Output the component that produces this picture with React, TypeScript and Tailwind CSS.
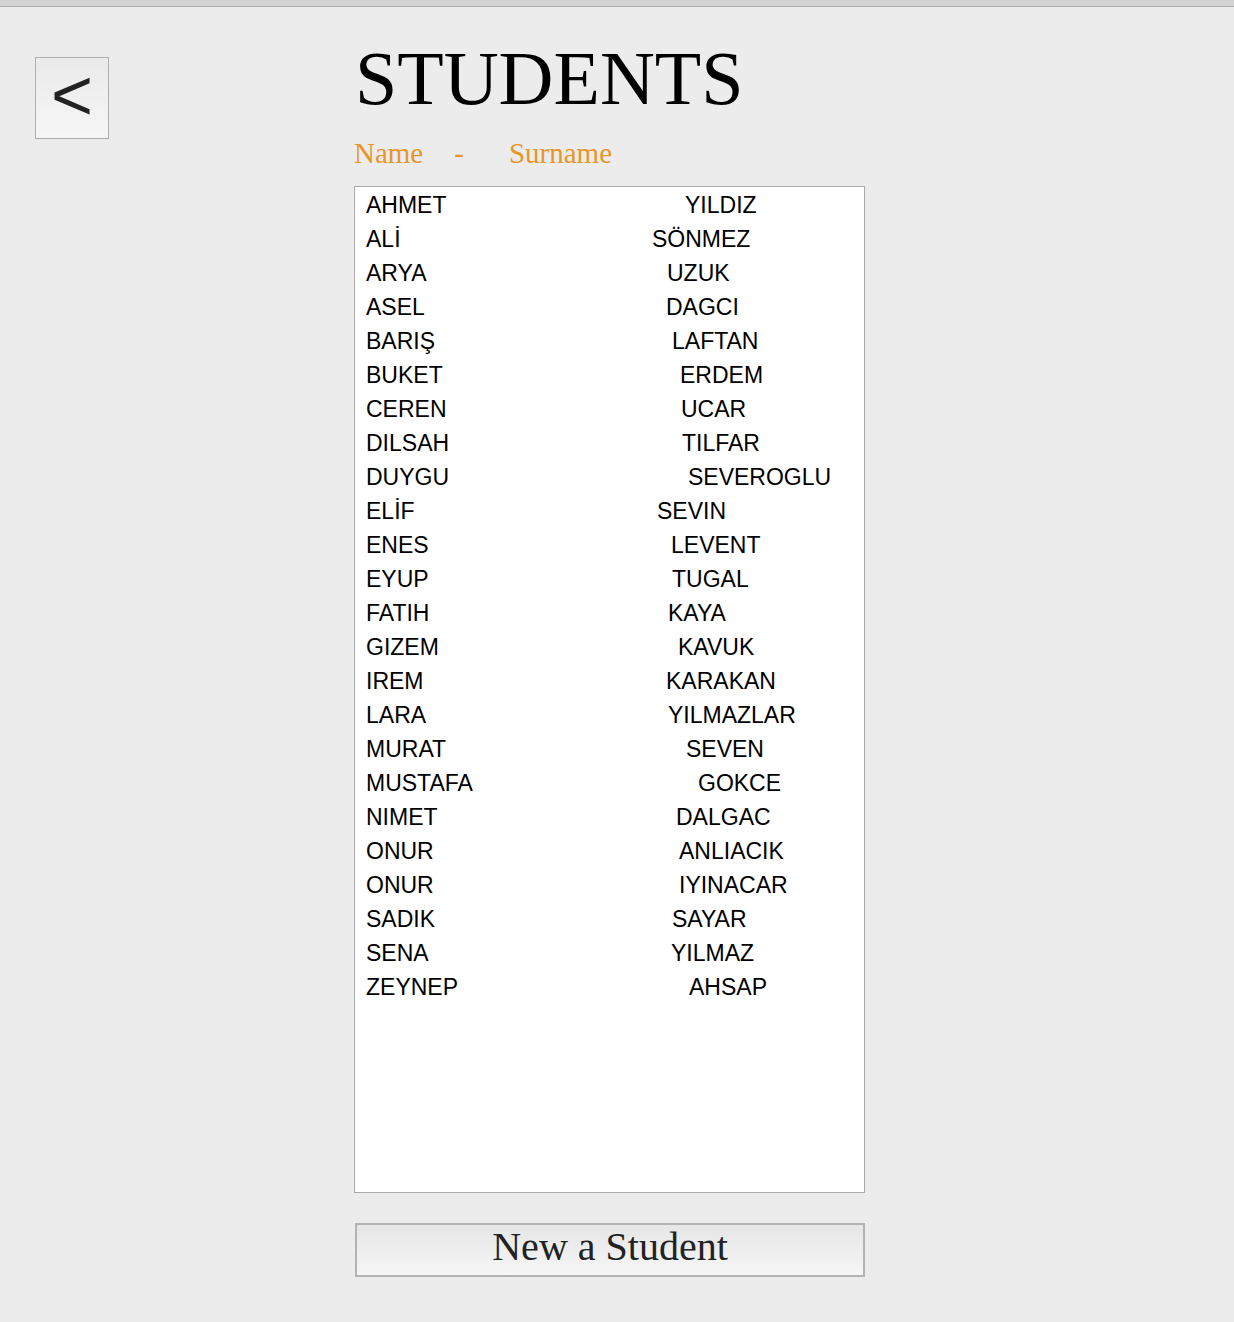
const students: { name: string; surname: string; indent: number }[] = [
  { name: "AHMET", surname: "YILDIZ", indent: 39 },
  { name: "ALİ", surname: "SÖNMEZ", indent: 6 },
  { name: "ARYA", surname: "UZUK", indent: 21 },
  { name: "ASEL", surname: "DAGCI", indent: 20 },
  { name: "BARIŞ", surname: "LAFTAN", indent: 26 },
  { name: "BUKET", surname: "ERDEM", indent: 34 },
  { name: "CEREN", surname: "UCAR", indent: 35 },
  { name: "DILSAH", surname: "TILFAR", indent: 36 },
  { name: "DUYGU", surname: "SEVEROGLU", indent: 42 },
  { name: "ELİF", surname: "SEVIN", indent: 11 },
  { name: "ENES", surname: "LEVENT", indent: 25 },
  { name: "EYUP", surname: "TUGAL", indent: 26 },
  { name: "FATIH", surname: "KAYA", indent: 22 },
  { name: "GIZEM", surname: "KAVUK", indent: 32 },
  { name: "IREM", surname: "KARAKAN", indent: 20 },
  { name: "LARA", surname: "YILMAZLAR", indent: 22 },
  { name: "MURAT", surname: "SEVEN", indent: 40 },
  { name: "MUSTAFA", surname: "GOKCE", indent: 52 },
  { name: "NIMET", surname: "DALGAC", indent: 30 },
  { name: "ONUR", surname: "ANLIACIK", indent: 33 },
  { name: "ONUR", surname: "IYINACAR", indent: 33 },
  { name: "SADIK", surname: "SAYAR", indent: 26 },
  { name: "SENA", surname: "YILMAZ", indent: 25 },
  { name: "ZEYNEP", surname: "AHSAP", indent: 43 },
];

export default function App() {
  return (
    <div className="min-h-[1322px] bg-[#ececec]">
      <div className="h-[6px] bg-[#d3d3d3]" />
      <div className="h-px bg-[#ababab]" />

      <div className="flex pl-[35px]">
        <button
          type="button"
          className="mt-[50px] flex h-[82px] w-[74px] items-center justify-center border border-[#aeaeae] bg-gradient-to-b from-[#eaeaea] to-[#f6f6f6] pb-[6px] font-['Liberation_Sans',sans-serif] text-[72px] leading-none text-[#222]"
        >
          &lt;
        </button>

        <main className="ml-[245px] flex w-[511px] flex-col">
          <h1 className="mt-[33px] pl-px font-['Liberation_Serif',serif] text-[76px] leading-none text-black">
            STUDENTS
          </h1>
          <p className="mt-[23px] font-['Liberation_Serif',serif] text-[29px] leading-none text-[#e8962a]">
            <span>Name</span>
            <span className="ml-[31px]">-</span>
            <span className="ml-[45px]">Surname</span>
          </p>

          <div className="mt-[18px] h-[1007px] border border-[#aaaaaa] bg-white pl-[11px] pt-px font-['Liberation_Sans',sans-serif] text-[23px] leading-[34px] text-black">
            {students.map((s, i) => (
              <div key={i} className="flex">
                <span className="w-[280px] shrink-0">{s.name}</span>
                <span style={{ paddingLeft: s.indent }}>{s.surname}</span>
              </div>
            ))}
          </div>

          <button
            type="button"
            className="mt-[30px] ml-px flex h-[54px] w-[510px] items-center justify-center border-2 border-[#b3b3b3] bg-gradient-to-b from-[#e6e6e6] to-[#f6f6f6] pb-[6px] font-['Liberation_Serif',serif] text-[40px] leading-none text-[#222]"
          >
            New a Student
          </button>
        </main>
      </div>
    </div>
  );
}
